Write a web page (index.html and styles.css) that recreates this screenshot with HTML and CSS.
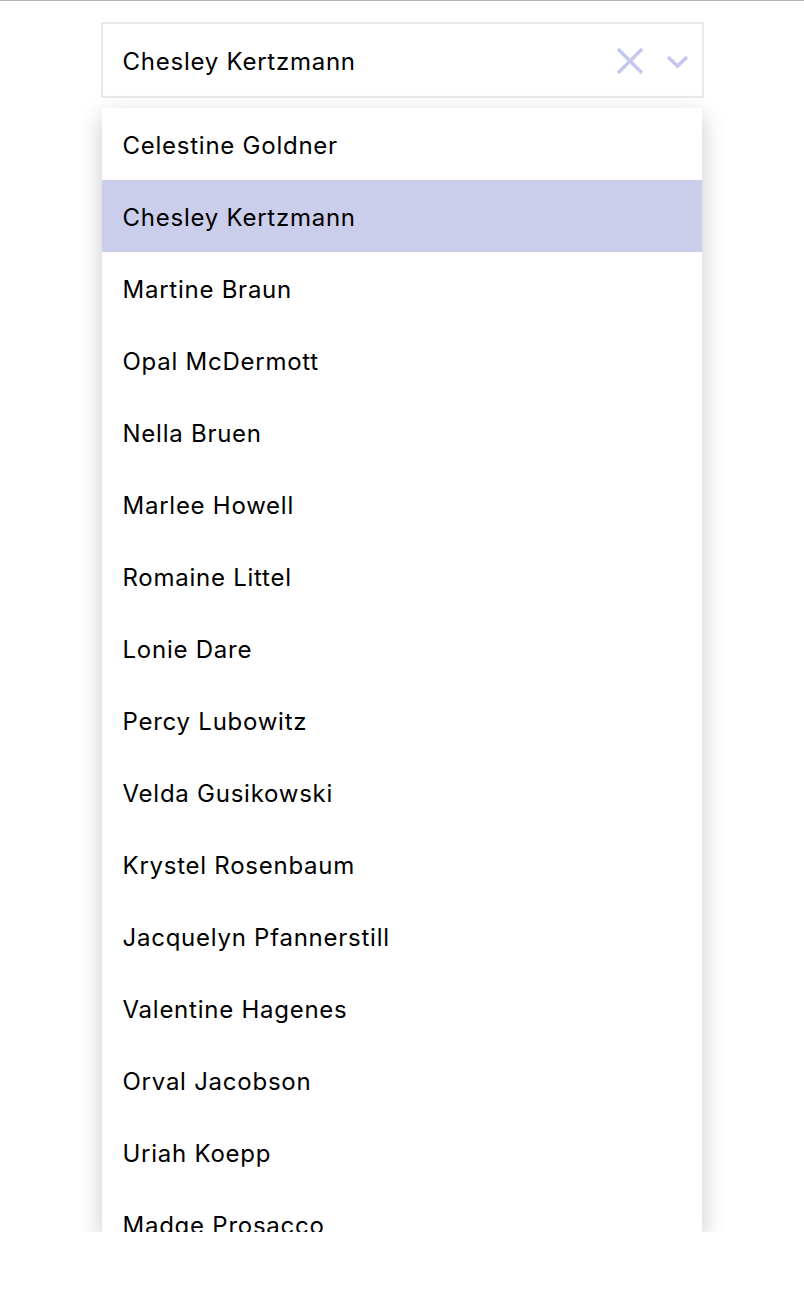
FILE: index.html
```html
<!DOCTYPE html>
<html>
<head>
<meta charset="utf-8">
<link rel="stylesheet" href="styles.css">
</head>
<body>
<div class="select">
  <div class="control">
    <span class="value">Chesley Kertzmann</span>
    <span class="icons">
      <svg class="clear" width="28" height="28" viewBox="0 0 28 28"><path d="M2 2 L26 26 M26 2 L2 26" stroke="#c5c8ee" stroke-width="3.5" fill="none"/></svg>
      <svg class="chev" width="23" height="14" viewBox="0 0 23 14"><path d="M2 2 L11.5 11 L21 2" stroke="#c5c8ee" stroke-width="3.5" fill="none"/></svg>
    </span>
  </div>
  <ul class="menu">
    <li>Celestine Goldner</li>
    <li class="active">Chesley Kertzmann</li>
    <li>Martine Braun</li>
    <li>Opal McDermott</li>
    <li>Nella Bruen</li>
    <li>Marlee Howell</li>
    <li>Romaine Littel</li>
    <li>Lonie Dare</li>
    <li>Percy Lubowitz</li>
    <li>Velda Gusikowski</li>
    <li>Krystel Rosenbaum</li>
    <li>Jacquelyn Pfannerstill</li>
    <li>Valentine Hagenes</li>
    <li>Orval Jacobson</li>
    <li>Uriah Koepp</li>
    <li>Madge Prosacco</li>
  </ul>
</div>
</body>
</html>
```
FILE: styles.css
```css
html, body {
  margin: 0;
  padding: 0;
  background: #fff;
}
body {
  border-top: 1px solid #b4b4b4;
  font-family: Inter, Roboto, "Liberation Sans", sans-serif;
  color: #000;
  letter-spacing: 0.75px;
}
.select {
  width: 603px;
  margin: 21px auto 0;
}
.control {
  box-sizing: border-box;
  height: 76px;
  border: 2px solid #e9e9e9;
  display: flex;
  align-items: center;
  padding: 2px 13px 0 20px;
  font-size: 24px;
}
.value {
  flex: 1;
}
.icons {
  display: flex;
  align-items: center;
  gap: 22px;
}
.clear { display: block; }
.chev { display: block; margin-top: 1px; }
.menu {
  list-style: none;
  margin: 10px 0 0 1px;
  padding: 0;
  width: 600px;
  height: 1124px;
  overflow: hidden;
  background: #fff;
  box-shadow: 0 8px 22px rgba(0,0,0,0.22);
}
.menu li {
  height: 72px;
  display: flex;
  align-items: center;
  padding: 2px 0 0 21px;
  box-sizing: border-box;
  font-size: 24px;
}
.menu li.active {
  background: #cbceea;
}
```
